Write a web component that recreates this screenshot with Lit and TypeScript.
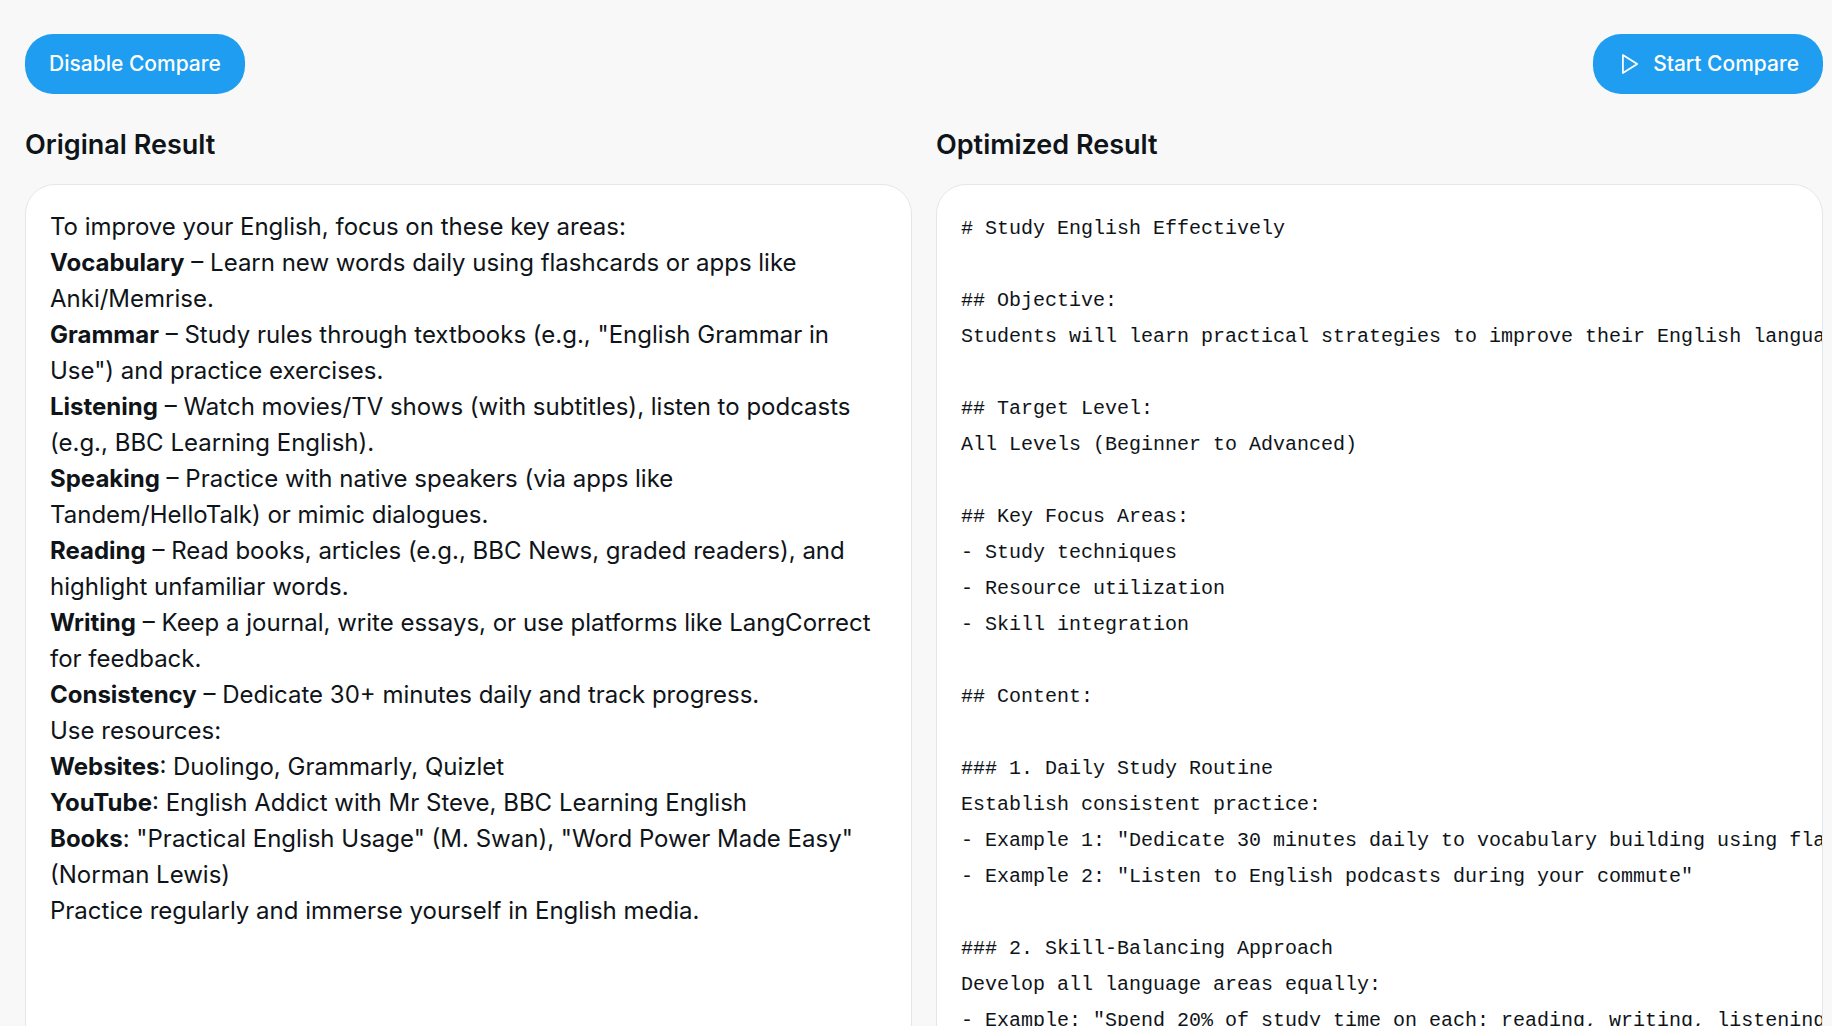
import { LitElement, html, css } from "lit";
import { customElement } from "lit/decorators.js";

interface ResultLine {
  term?: string;
  text: string;
}

const ORIGINAL: ResultLine[] = [
  { text: "To improve your English, focus on these key areas:" },
  { term: "Vocabulary", text: " – Learn new words daily using flashcards or apps like Anki/Memrise." },
  { term: "Grammar", text: " – Study rules through textbooks (e.g., \"English Grammar in Use\") and practice exercises." },
  { term: "Listening", text: " – Watch movies/TV shows (with subtitles), listen to podcasts (e.g., BBC Learning English)." },
  { term: "Speaking", text: " – Practice with native speakers (via apps like Tandem/HelloTalk) or mimic dialogues." },
  { term: "Reading", text: " – Read books, articles (e.g., BBC News, graded readers), and highlight unfamiliar words." },
  { term: "Writing", text: " – Keep a journal, write essays, or use platforms like LangCorrect for feedback." },
  { term: "Consistency", text: " – Dedicate 30+ minutes daily and track progress." },
  { text: "Use resources:" },
  { term: "Websites", text: ": Duolingo, Grammarly, Quizlet" },
  { term: "YouTube", text: ": English Addict with Mr Steve, BBC Learning English" },
  { term: "Books", text: ": \"Practical English Usage\" (M. Swan), \"Word Power Made Easy\" (Norman Lewis)" },
  { text: "Practice regularly and immerse yourself in English media." },
];

const OPTIMIZED = `# Study English Effectively

## Objective:
Students will learn practical strategies to improve their English language

## Target Level:
All Levels (Beginner to Advanced)

## Key Focus Areas:
- Study techniques
- Resource utilization
- Skill integration

## Content:

### 1. Daily Study Routine
Establish consistent practice:
- Example 1: "Dedicate 30 minutes daily to vocabulary building using flashcards"
- Example 2: "Listen to English podcasts during your commute"

### 2. Skill-Balancing Approach
Develop all language areas equally:
- Example: "Spend 20% of study time on each: reading, writing, listening"`;

@customElement("app-root")
export class AppRoot extends LitElement {
  static styles = css`
    :host {
      display: block;
      box-sizing: border-box;
      height: 100vh;
      overflow: auto;
      scrollbar-width: none;
      padding: 34px 9px 34px 25px;
      background: #f8f8f8;
      color: #0f1419;
      font-family: Inter, "Liberation Sans", sans-serif;
      font-size: 24px;
      line-height: 36px;
    }

    .toolbar {
      display: flex;
      align-items: center;
      justify-content: space-between;
      margin-bottom: 30px;
    }

    .button {
      display: inline-flex;
      align-items: center;
      gap: 12px;
      height: 60px;
      padding: 0 24px;
      border: 0;
      border-radius: 28px;
      background: #1e9df1;
      color: #ffffff;
      font: 500 21px/30px Inter, "Liberation Sans", sans-serif;
      cursor: pointer;
    }

    .icon {
      width: 24px;
      height: 24px;
      fill: none;
      stroke: currentColor;
      stroke-width: 1.8;
      stroke-linejoin: round;
    }

    .columns {
      display: grid;
      grid-template-columns: repeat(2, minmax(0, 1fr));
      gap: 24px;
    }

    .column {
      display: flex;
      flex-direction: column;
      gap: 18px;
    }

    .title {
      margin: 0;
      font-size: 27px;
      line-height: 42px;
      font-weight: 600;
    }

    .panel {
      flex: 1;
      padding: 24px;
      border: 1px solid #e1e8ed;
      border-radius: 30px;
      background: #ffffff;
      overflow: hidden;
    }

    .line {
      margin: 0;
    }

    .term {
      font-weight: 700;
    }

    .source {
      margin: 0;
      padding-top: 2px;
      font-family: "Liberation Mono", monospace;
      font-size: 20px;
      line-height: 36px;
      white-space: pre;
    }
  `;

  render() {
    return html`
      <div class="toolbar">
        <button class="button" type="button">Disable Compare</button>
        <button class="button" type="button">
          <svg class="icon" viewBox="0 0 24 24" aria-hidden="true">
            <path d="M5.9 3.1 20.2 12 5.9 20.9Z" />
          </svg>
          Start Compare
        </button>
      </div>
      <main class="columns">
        <section class="column">
          <h3 class="title">Original Result</h3>
          <div class="panel">
            ${ORIGINAL.map(
              (line) => html`<p class="line">${line.term ? html`<strong class="term">${line.term}</strong>` : null}${line.text}</p>`,
            )}
          </div>
        </section>
        <section class="column">
          <h3 class="title">Optimized Result</h3>
          <div class="panel"><pre class="source">${OPTIMIZED}</pre></div>
        </section>
      </main>
    `;
  }
}
